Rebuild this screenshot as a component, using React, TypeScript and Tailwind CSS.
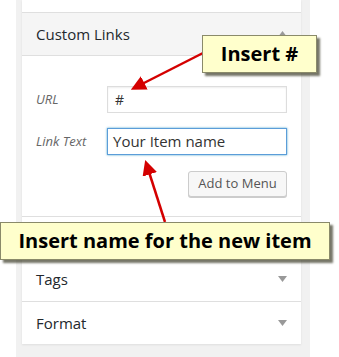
import React from "react";

const Chevron = ({ up = false }: { up?: boolean }) => (
  <svg width="9" height="6" viewBox="0 0 9 6" className={up ? "rotate-180" : ""}>
    <path d="M0 0 L9 0 L4.5 6 Z" fill="#999" />
  </svg>
);

const Section = ({ title }: { title: string }) => (
  <div className="flex h-[42px] items-center justify-between border-b border-[#dfdfdf] pl-[14px] pr-[14px] last:border-b-0">
    <span className="text-[15px] text-[#23282d]">{title}</span>
    <Chevron />
  </div>
);

const App = () => {
  return (
    <div className="relative h-[357px] w-[339px] overflow-hidden bg-white font-['Open_Sans',sans-serif]">
      <div className="ml-[16px] h-full w-[294px] bg-[#f1f1f1] pl-[6px] pr-[9px]">
        <div className="bg-white shadow-[0_1px_2px_rgba(0,0,0,0.08)]">
          <div className="h-[13px] border-b border-[#dfdfdf]" />

          <div className="flex h-[43px] items-center justify-between border-b border-[#dfdfdf] bg-[#f5f5f5] pl-[14px] pr-[14px]">
            <span className="text-[15px] text-[#23282d]">Custom Links</span>
            <Chevron up />
          </div>

          <div className="border-b border-[#dfdfdf] pb-[19px] pl-[14px] pr-[14px] pt-[30px]">
            <div className="flex items-center">
              <span className="w-[71px] text-[13px] italic text-[#666]">URL</span>
              <div className="flex h-[27px] w-[180px] items-center border border-[#ddd] bg-white px-[7px] text-[14px] text-[#333] shadow-[inset_0_1px_2px_rgba(0,0,0,0.07)]">
                #
              </div>
            </div>
            <div className="mt-[15px] flex items-center">
              <span className="w-[71px] text-[13px] italic text-[#666]">Link Text</span>
              <div className="flex h-[27px] w-[180px] items-center border border-[#5b9dd9] bg-white px-[5px] text-[15px] text-[#333] shadow-[0_0_2px_rgba(30,140,190,0.8)]">
                Your Item name
              </div>
            </div>
            <div className="mt-[16px] flex justify-end">
              <button className="h-[26px] w-[99px] rounded-[3px] border border-[#ccc] bg-[#f7f7f7] text-[13px] text-[#555] shadow-[0_1px_0_#ccc]">
                Add to Menu
              </button>
            </div>
          </div>

          <div className="h-[85px] border-b border-[#dfdfdf] pl-[14px] pr-[14px] pt-[51px]">
            <div className="flex items-center justify-between">
              <span className="text-[15px] text-[#23282d]">Tags</span>
              <Chevron />
            </div>
          </div>
          <Section title="Format" />
        </div>
      </div>

      {/* arrows */}
      <svg className="absolute left-0 top-0" width="339" height="357" viewBox="0 0 339 357">
        <defs>
          <marker id="head" markerWidth="6" markerHeight="6" refX="1" refY="3" orient="auto" markerUnits="strokeWidth">
            <path d="M0 0 L6 3 L0 6 Z" fill="#d40000" />
          </marker>
        </defs>
        <line x1="203" y1="53" x2="142" y2="84" stroke="#d40000" strokeWidth="2.5" markerEnd="url(#head)" />
        <line x1="165" y1="222" x2="149" y2="172" stroke="#d40000" strokeWidth="2.5" markerEnd="url(#head)" />
      </svg>

      {/* callouts */}
      <div className="absolute left-[202px] top-[35px] flex h-[38px] w-[115px] items-center justify-center border border-[#8a8a6a] bg-[#ffffcc] shadow-[3px_3px_2px_rgba(60,60,40,0.7)]">
        <span className="text-[20px] font-bold text-black">Insert #</span>
      </div>
      <div className="absolute left-0 top-[222px] flex h-[38px] w-[330px] items-center justify-center border border-[#8a8a6a] bg-[#ffffcc] shadow-[3px_3px_2px_rgba(60,60,40,0.7)]">
        <span className="text-[20px] font-bold text-black">Insert name for the new item</span>
      </div>
    </div>
  );
};

export default App;
